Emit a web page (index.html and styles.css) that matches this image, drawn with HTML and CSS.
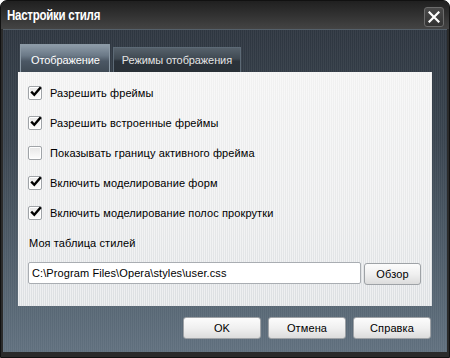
FILE: index.html
```html
<!DOCTYPE html>
<html lang="ru">
<head>
  <meta charset="UTF-8" />
  <title>Настройки стиля</title>
  <link rel="stylesheet" href="styles.css">
</head>
<body>
  <div class="window">
    <div class="titlebar">
      <span class="title">Настройки стиля</span>
      <button class="close" aria-label="Закрыть">
        <svg width="12" height="12" viewBox="0 0 12 12">
          <path d="M1.5 1.5 L10.5 10.5 M10.5 1.5 L1.5 10.5" stroke="#fff" stroke-width="2.2" stroke-linecap="square"/>
        </svg>
      </button>
    </div>

    <div class="client">
      <div class="tabs">
        <div class="tab active">Отображение</div>
        <div class="tab">Режимы отображения</div>
      </div>

      <div class="panel">
        <label class="row"><span class="check on"></span>Разрешить фреймы</label>
        <label class="row"><span class="check on"></span>Разрешить встроенные фреймы</label>
        <label class="row"><span class="check"></span>Показывать границу активного фрейма</label>
        <label class="row"><span class="check on"></span>Включить моделирование форм</label>
        <label class="row"><span class="check on"></span>Включить моделирование полос прокрутки</label>

        <div class="field-label">Моя таблица стилей</div>
        <div class="file-row">
          <div class="input">C:\Program Files\Opera\styles\user.css</div>
          <button class="btn browse">Обзор</button>
        </div>
      </div>

      <div class="actions">
        <button class="btn">OK</button>
        <button class="btn">Отмена</button>
        <button class="btn">Справка</button>
      </div>
    </div>
  </div>
</body>
</html>
```

FILE: styles.css
```css
body {
  margin: 0;
  padding: 0;
  background: #fff;
  font-family: 'Liberation Sans', Arial, sans-serif;
  font-size: 11px;
  letter-spacing: 0.1px;
}

.window {
  width: 450px;
  height: 358px;
  box-sizing: border-box;
  display: flex;
  flex-direction: column;
  background: #2b2b2b;
  border: 1px solid #111;
  border-radius: 7px 7px 0 0;
  padding: 0 2px 5px 2px;
}

.titlebar {
  height: 28px;
  display: flex;
  align-items: center;
  justify-content: space-between;
  margin: 0 -2px;
  padding: 0 5px 0 6px;
  background: linear-gradient(#202020, #2e2e2e 40%, #444 100%);
  border-radius: 6px 6px 0 0;
}

.title {
  color: #fff;
  font-weight: bold;
  font-size: 14px;
  letter-spacing: -0.3px;
  transform: scaleX(0.82);
  transform-origin: left center;
}

.close {
  width: 20px;
  height: 20px;
  margin-top: 4px;
  padding: 0;
  display: flex;
  align-items: center;
  justify-content: center;
  background: linear-gradient(#4a4a4a, #333);
  border: 1px solid #6c6c6c;
  border-radius: 3px;
}

.client {
  flex: 1;
  display: flex;
  flex-direction: column;
  padding: 15px 15px 13px 15px;
  border-top: 1px solid #55606a;
  background:
    repeating-linear-gradient(90deg, rgba(255,255,255,0.05) 0 1px, transparent 1px 2px),
    linear-gradient(#2e3640, #3a4550 35%, #4e5c69 70%, #60707e);
}

.tabs {
  display: flex;
  align-items: flex-end;
  height: 27px;
  padding-left: 2px;
}

.tab {
  height: 24px;
  line-height: 24px;
  padding: 0 8px;
  margin-right: 3px;
  letter-spacing: -0.1px;
  color: #e4e4e4;
  border: 1px solid #5d6a76;
  border-bottom: none;
  background: linear-gradient(#56616b, #3f4952 45%, #2b323a 55%, #2a3138);
}

.tab.active {
  height: 27px;
  line-height: 30px;
  padding: 0 9px 0 10px;
  color: #fff;
  border-color: #8c9aa6;
  background: linear-gradient(#8d9ba8, #6a7886 40%, #4b5764 60%, #3f4a55);
}

.panel {
  height: 234px;
  box-sizing: border-box;
  padding: 6px 11px 0 10px;
  background:
    repeating-linear-gradient(90deg, rgba(255,255,255,0.5) 0 1px, transparent 1px 2px),
    linear-gradient(#f1f1f1, #e8e9ea 60%, #dcdfe2);
}

.row {
  display: flex;
  align-items: center;
  height: 30px;
  color: #000;
}

.check {
  position: relative;
  width: 12px;
  height: 12px;
  margin-right: 8px;
  border: 1px solid #a0a4a8;
  border-radius: 2px;
  background: linear-gradient(#e6e6e6, #fdfdfd);
  box-shadow: inset 0 0 0 1px #fff;
}

.check.on::after {
  content: "";
  position: absolute;
  left: 1px;
  top: -1px;
  width: 12px;
  height: 11px;
  background: no-repeat center/contain url("data:image/svg+xml,%3Csvg xmlns='http://www.w3.org/2000/svg' viewBox='0 0 12 11'%3E%3Cpath d='M1.2 5.6 L4.3 8.8 L10.8 1.2' fill='none' stroke='%23000' stroke-width='2.4'/%3E%3C/svg%3E");
}

.field-label {
  height: 30px;
  line-height: 30px;
  margin-left: 1px;
  color: #000;
}

.file-row {
  display: flex;
  gap: 3px;
  margin-top: 4px;
}

.input {
  width: 333px;
  height: 22px;
  box-sizing: border-box;
  line-height: 20px;
  padding: 0 3px;
  background: #fff;
  border: 1px solid #a9adb2;
  border-radius: 2px;
  color: #000;
}

.btn {
  height: 22px;
  padding: 0;
  font-family: inherit;
  font-size: 11px;
  letter-spacing: 0.1px;
  color: #000;
  background: linear-gradient(#fcfcfc, #f0f0f0 50%, #dcdcdc);
  border: 1px solid #9ea2a6;
  border-radius: 3px;
}

.browse {
  width: 57px;
  margin-top: 1px;
}

.actions {
  display: flex;
  justify-content: flex-end;
  gap: 7px;
  margin-top: 11px;
  padding-right: 1px;
}

.actions .btn {
  width: 78px;
}
```
